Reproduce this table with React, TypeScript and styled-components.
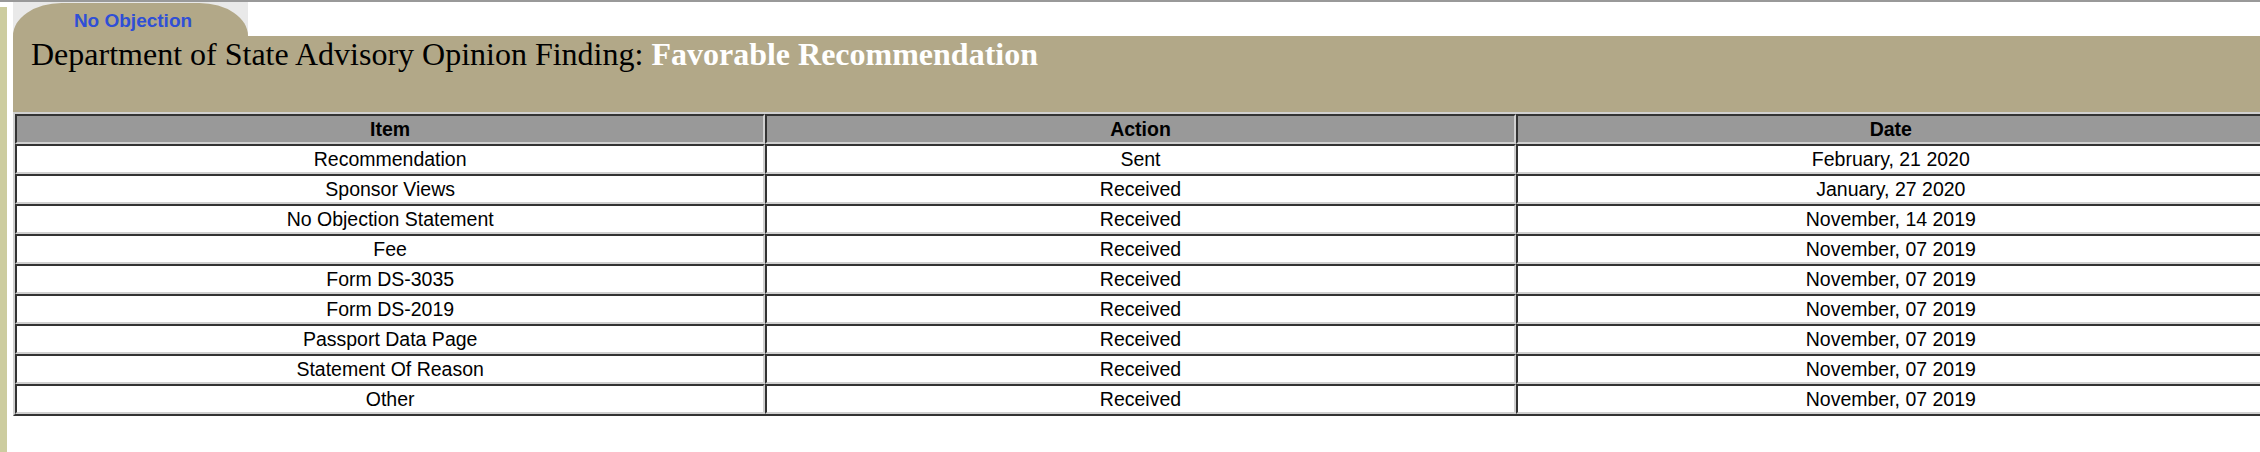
import React from "react";
import styled, { createGlobalStyle } from "styled-components";

const GlobalStyle = createGlobalStyle`
  html, body {
    margin: 0;
    padding: 0;
    background: #ffffff;
    overflow: hidden;
  }
  body {
    font-family: "Liberation Sans", Arial, sans-serif;
  }
`;

const Page = styled.div`
  min-height: 100vh;
  display: flex;
  flex-direction: column;
`;

const TopRule = styled.div`
  height: 2px;
  background: #999999;
  flex: none;
`;

const Layout = styled.div`
  flex: 1;
  display: flex;
  gap: 6px;
  align-items: stretch;
`;

const LeftStrip = styled.div`
  width: 7px;
  flex: none;
  margin-top: 5px;
  background: #cccc9f;
`;

const Main = styled.div`
  flex: none;
  width: 2255px;
  display: flex;
  flex-direction: column;
`;

const TabWell = styled.div`
  width: 235px;
  height: 34px;
  background: #e9e9e9;
  display: flex;
  align-items: flex-end;
`;

const Tab = styled.div`
  width: 100%;
  height: 33px;
  box-sizing: border-box;
  background: #b2a888;
  border-radius: 50px 50px 0 0 / 34px 34px 0 0;
  padding-top: 7px;
  padding-left: 5px;
  text-align: center;
  font-family: "Liberation Sans", Arial, sans-serif;
  font-weight: bold;
  font-size: 19px;
  line-height: 21px;
  color: #2f4fd6;
`;

const Band = styled.div`
  height: 76px;
  background: #b2a888;
  padding-left: 18px;
  font-family: "Liberation Serif", "Times New Roman", serif;
  font-size: 32px;
  line-height: 36px;
  color: #000000;
  white-space: nowrap;
`;

const Verdict = styled.span`
  color: #ffffff;
  font-weight: bold;
`;

const Table = styled.table`
  width: 2255px;
  table-layout: fixed;
  border-collapse: separate;
  border-spacing: 0;
  border-style: solid;
  border-width: 2px;
  border-color: #d0d0d0 #333333 #333333 #d0d0d0;
  font-family: "Liberation Sans", Arial, sans-serif;
  font-size: 19.5px;
  color: #000000;
`;

const Cell = styled.td<{ $head?: boolean }>`
  padding: 0;
  height: 26px;
  line-height: 26px;
  text-align: center;
  vertical-align: middle;
  border-style: solid;
  border-width: 2px;
  border-color: #333333 #d0d0d0 #d0d0d0 #333333;
  background: ${(p) => (p.$head ? "#999999" : "#ffffff")};
  font-weight: ${(p) => (p.$head ? "bold" : "normal")};
  white-space: nowrap;
  overflow: hidden;
`;

const rows: [string, string, string][] = [
  ["Recommendation", "Sent", "February, 21 2020"],
  ["Sponsor Views", "Received", "January, 27 2020"],
  ["No Objection Statement", "Received", "November, 14 2019"],
  ["Fee", "Received", "November, 07 2019"],
  ["Form DS-3035", "Received", "November, 07 2019"],
  ["Form DS-2019", "Received", "November, 07 2019"],
  ["Passport Data Page", "Received", "November, 07 2019"],
  ["Statement Of Reason", "Received", "November, 07 2019"],
  ["Other", "Received", "November, 07 2019"],
];

export default function App() {
  return (
    <>
      <GlobalStyle />
      <Page>
        <TopRule />
        <Layout>
          <LeftStrip />
          <Main>
            <TabWell>
              <Tab>No Objection</Tab>
            </TabWell>
            <Band>
              Department of State Advisory Opinion Finding:{" "}
              <Verdict>Favorable Recommendation</Verdict>
            </Band>
            <Table>
              <colgroup>
                <col style={{ width: "33.333%" }} />
                <col style={{ width: "33.333%" }} />
                <col style={{ width: "33.334%" }} />
              </colgroup>
              <thead>
                <tr>
                  <Cell as="th" $head>Item</Cell>
                  <Cell as="th" $head>Action</Cell>
                  <Cell as="th" $head>Date</Cell>
                </tr>
              </thead>
              <tbody>
                {rows.map(([item, action, date]) => (
                  <tr key={item}>
                    <Cell>{item}</Cell>
                    <Cell>{action}</Cell>
                    <Cell>{date}</Cell>
                  </tr>
                ))}
              </tbody>
            </Table>
          </Main>
        </Layout>
      </Page>
    </>
  );
}
